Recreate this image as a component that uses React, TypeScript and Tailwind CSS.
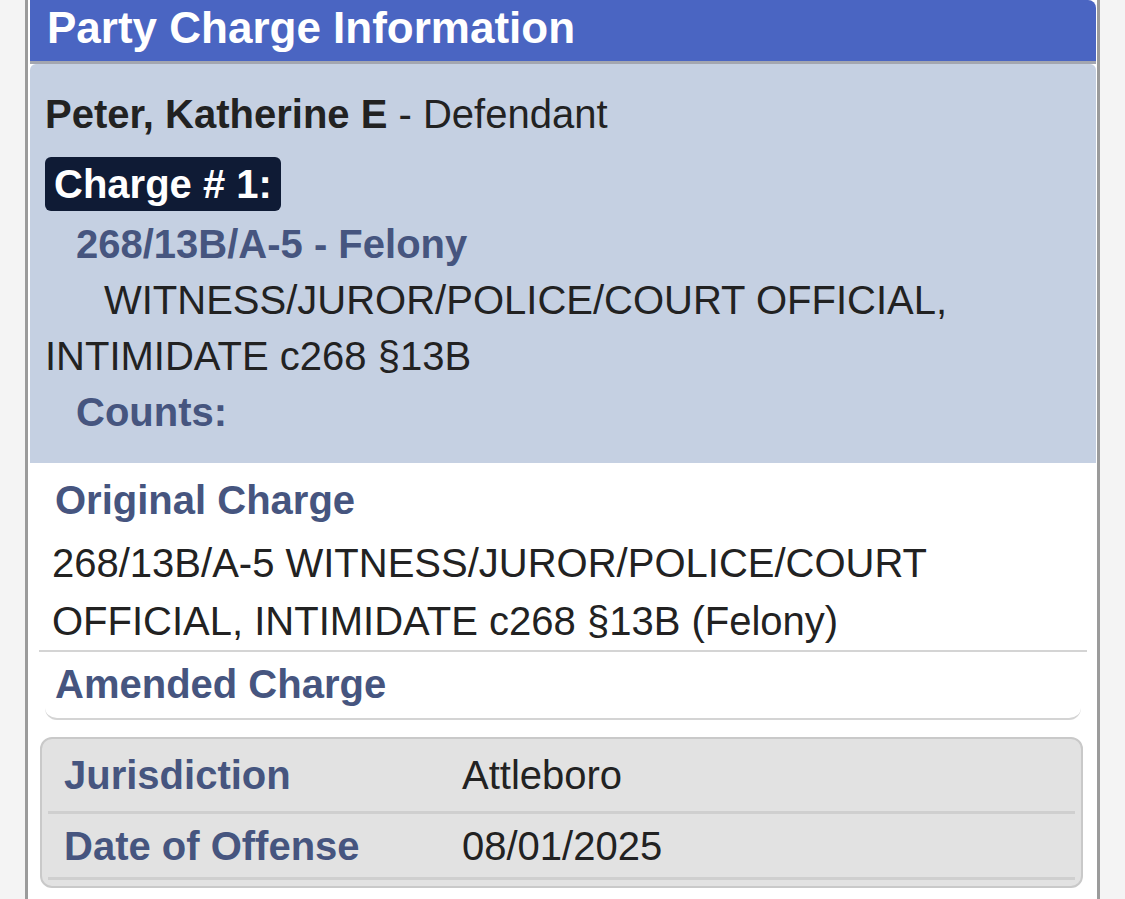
import React from "react";

const Divider: React.FC<{ className?: string }> = ({ className }) => (
  <div className={"h-[2px] bg-[#d4d4d4] " + (className ?? "")} />
);

const App: React.FC = () => {
  return (
    <div className="min-h-[899px] bg-[#f4f4f4] font-['Liberation_Sans',Arial,sans-serif] text-[40px] text-[#222]">
      <div className="ml-[25px] w-[1075px] min-h-[899px] border-x-[3px] border-[#9b9b9b] bg-white pl-[2px] pr-[1px]">
        {/* header */}
        <div className="flex h-[61px] items-center rounded-tr-lg bg-[#4a65c2] pl-[17px] pb-[6px] text-[44px] font-bold text-white">
          Party Charge Information
        </div>
        <div className="h-[3px] bg-[#a3a6b0]" />

        {/* charge summary */}
        <div className="rounded-t-md bg-[#c5d0e2] pl-[15px] pr-4 pt-[22px] pb-[23px]">
          <div className="leading-[56px]">
            <span className="font-bold">Peter, Katherine E</span> - Defendant
          </div>
          <div className="mt-[15px] inline-flex h-[54px] items-center rounded-md bg-[#0f1b35] px-[9px] font-bold text-white">
            Charge # 1:
          </div>
          <div className="mt-[2px] pl-[31px] font-bold leading-[56px] text-[#46557f]">
            268/13B/A-5 - Felony
          </div>
          <div className="indent-[59px] leading-[56px]">
            WITNESS/JUROR/POLICE/COURT OFFICIAL, INTIMIDATE c268 §13B
          </div>
          <div className="pl-[31px] font-bold leading-[56px] text-[#46557f]">
            Counts:
          </div>
        </div>

        {/* original / amended */}
        <div className="px-[9px] pt-[9px]">
          <div className="pl-[16px] font-bold leading-[56px] text-[#46557f]">
            Original Charge
          </div>
          <div className="mt-[6px] pl-[13px] pr-10 leading-[58px]">
            268/13B/A-5 WITNESS/JUROR/POLICE/COURT OFFICIAL, INTIMIDATE c268 §13B (Felony)
          </div>
          <Divider />
          <div className="mx-[6px] mb-[17px] mt-[4px] rounded-b-xl border-b-2 border-[#d4d4d4] pb-[6px]">
            <div className="pl-[10px] font-bold leading-[56px] text-[#46557f]">
              Amended Charge
            </div>
          </div>

          <div className="mx-px mr-[4px] rounded-xl border-2 border-[#c9c9c9] bg-[#e2e2e2] pb-[6px]">
            <div className="flex h-[72px] items-center pl-[22px]">
              <div className="w-[398px] font-bold text-[#46557f]">Jurisdiction</div>
              <div>Attleboro</div>
            </div>
            <div className="mx-[6px] h-[3px] bg-[#cfcfcf]" />
            <div className="flex h-[63px] items-center pl-[22px]">
              <div className="w-[398px] font-bold text-[#46557f]">Date of Offense</div>
              <div>08/01/2025</div>
            </div>
            <div className="mx-[6px] h-[3px] bg-[#cfcfcf]" />
          </div>
        </div>
      </div>
    </div>
  );
};

export default App;
